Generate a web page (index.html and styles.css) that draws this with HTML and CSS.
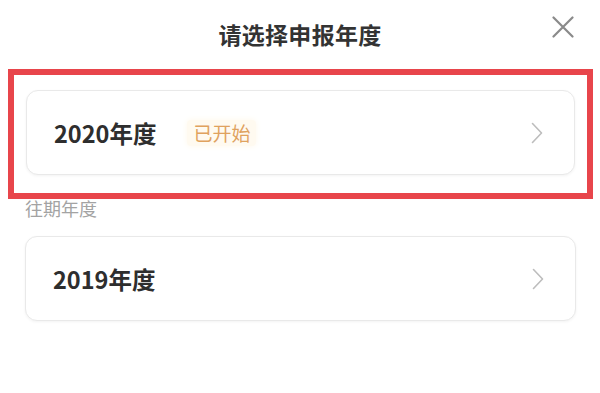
FILE: index.html
```html
<!DOCTYPE html>
<html lang="zh-CN">
<head>
<meta charset="utf-8">
<title>请选择申报年度</title>
<link rel="stylesheet" href="styles.css">
</head>
<body>
<div class="sheet">
  <header class="header">
    <h1 class="title">请选择申报年度</h1>
    <button class="close" aria-label="关闭">
      <svg width="22" height="22" viewBox="0 0 22 22"><path d="M1.5 1.5 L20.5 20.5 M20.5 1.5 L1.5 20.5" stroke="#8a8a8a" stroke-width="2.2" fill="none" stroke-linecap="round"/></svg>
    </button>
  </header>
  <div class="highlight">
    <div class="card">
      <span class="year">2020年度</span>
      <span class="tag">已开始</span>
      <svg class="chev" width="12" height="22" viewBox="0 0 12 22"><path d="M1.5 1.5 L10.5 11 L1.5 20.5" stroke="#bdbdbd" stroke-width="1.6" fill="none" stroke-linecap="round" stroke-linejoin="round"/></svg>
    </div>
  </div>
  <div class="label">往期年度</div>
  <div class="list">
    <div class="card">
      <span class="year">2019年度</span>
      <svg class="chev" width="12" height="22" viewBox="0 0 12 22"><path d="M1.5 1.5 L10.5 11 L1.5 20.5" stroke="#bdbdbd" stroke-width="1.6" fill="none" stroke-linecap="round" stroke-linejoin="round"/></svg>
    </div>
  </div>
</div>
</body>
</html>
```
FILE: styles.css
```css
* { box-sizing: border-box; }
html, body { margin: 0; padding: 0; background: #fff; }
body {
  font-family: "Noto Sans CJK SC", "Noto Sans", sans-serif;
  color: #333;
  width: 600px;
  height: 393px;
  overflow: hidden;
}
.sheet { display: flex; flex-direction: column; }
.header {
  position: relative;
  height: 69px;
  display: flex;
  align-items: center;
  justify-content: center;
}
.title {
  margin: 0;
  font-size: 23px;
  font-weight: 700;
  color: #333;
  line-height: 30px;
  letter-spacing: 0.3px;
  padding-bottom: 1px;
}
.close {
  position: absolute;
  right: 26px;
  top: 16px;
  border: 0;
  padding: 0;
  background: none;
  width: 22px;
  height: 22px;
  display: flex;
}
.highlight {
  margin: 0 7px 0 8px;
  border: 6.5px solid #e8454b;
  padding: 15px 12px 18px 12px;
}
.card {
  height: 85px;
  border: 1px solid #e9e9e9;
  border-radius: 12px;
  background: #fff;
  box-shadow: 0 1px 3px rgba(0,0,0,0.05);
  display: flex;
  align-items: center;
  padding: 0 31px 0 27px;
}
.year {
  font-size: 23.5px;
  font-weight: 700;
  color: #2e2e2e;
  line-height: 28px;
}
.tag {
  margin-left: 31px;
  padding: 2px 6px;
  font-size: 19px;
  line-height: 22px;
  color: #e0a25e;
  background: #fffaf0;
  border-radius: 4px;
  box-shadow: 0 0 6px #fff8ea;
}
.chev { margin-left: auto; }
.label {
  padding-left: 25px;
  font-size: 18px;
  line-height: 18px;
  color: #a3a3a3;
  margin-top: 0;
}
.list { padding: 19px 24px 0 25px; }
```
